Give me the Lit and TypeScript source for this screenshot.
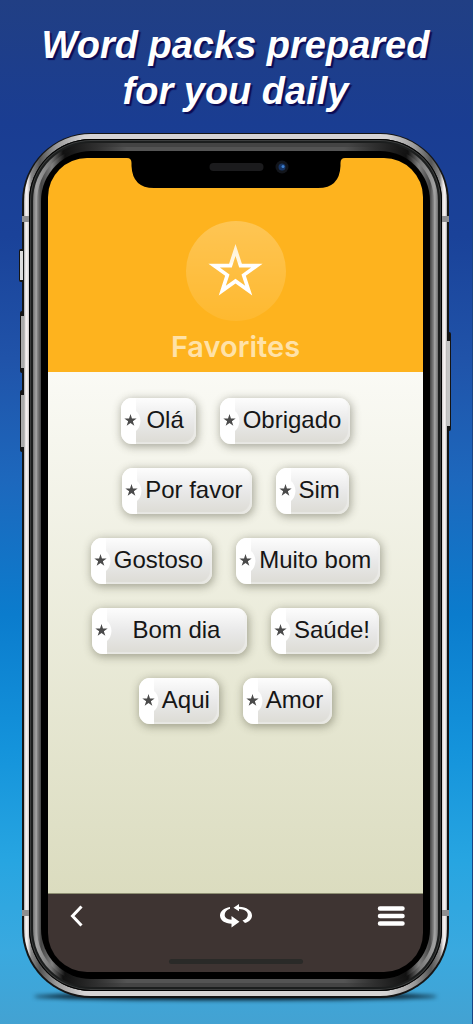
import { LitElement, html, css, svg } from "lit";
import { customElement, property } from "lit/decorators.js";
import { classMap } from "lit/directives/class-map.js";

interface Word {
  text: string;
  size?: "short" | "wide";
}

const WORDS: Word[] = [
  { text: "Olá", size: "short" },
  { text: "Obrigado" },
  { text: "Por favor" },
  { text: "Sim" },
  { text: "Gostoso" },
  { text: "Muito bom" },
  { text: "Bom dia", size: "wide" },
  { text: "Saúde!" },
  { text: "Aqui" },
  { text: "Amor" },
];

/** Points of a regular five-pointed star. */
function starPath(cx: number, cy: number, r: number): string {
  const pts: string[] = [];
  for (let i = 0; i < 10; i++) {
    const radius = i % 2 === 0 ? r : r * 0.382;
    const a = (Math.PI / 5) * i - Math.PI / 2;
    pts.push(`${(cx + radius * Math.cos(a)).toFixed(2)} ${(cy + radius * Math.sin(a)).toFixed(2)}`);
  }
  return `M${pts.join("L")}Z`;
}

@customElement("word-chip")
class WordChip extends LitElement {
  @property() text = "";
  @property() size = "";

  static styles = css`
    :host {
      display: block;
    }
    .chip {
      display: flex;
      align-items: center;
      height: 46px;
      margin: 0;
      padding: 0 9px 0 0;
      border: 0;
      border-radius: 11px;
      overflow: hidden;
      font: 24px/28px "Liberation Sans", Arial, sans-serif;
      color: #161616;
      background: linear-gradient(#fdfdfd, #e9e9e9 50%, #dcdbd4);
      box-shadow: 1px 2px 8px 1px rgba(70, 70, 50, 0.42), inset -2px -2px 1px rgba(240, 240, 236, 0.6);
      cursor: pointer;
    }
    .short {
      min-width: 75px;
    }
    .wide {
      min-width: 155px;
    }
    .tab {
      flex: none;
      width: 23px;
      height: 46px;
    }
    .label {
      flex: 1;
      padding-bottom: 2px;
      text-align: center;
      white-space: nowrap;
    }
  `;

  render() {
    return html`<button
      class=${classMap({ chip: true, short: this.size === "short", wide: this.size === "wide" })}
      type="button"
    >
      <svg class="tab" viewBox="0 0 23 46" aria-hidden="true">
        <path fill="#fff" d="M0 0H15V13Q19 16 19.500 23Q19 30 15 33V46H0Z" />
        <path fill="#4a4a4a" d=${starPath(9.5, 22.5, 6.5)} />
      </svg>
      <span class="label">${this.text}</span>
    </button>`;
  }
}

@customElement("app-root")
class AppRoot extends LitElement {
  static styles = css`
    :host {
      display: flex;
      flex-direction: column;
      box-sizing: border-box;
      min-height: 100vh;
      padding: 22px 23px 26px 22px;
      border-right: 1px solid #1a4484;
      isolation: isolate;
      font-family: "Liberation Sans", Arial, sans-serif;
      background: linear-gradient(
        #213f84 0%,
        #1a3d92 12%,
        #1a4299 23%,
        #2053a9 35%,
        #1d68bd 47%,
        #0b7ccd 60%,
        #1493db 73%,
        #27a5e1 84%,
        #3aa9df 93%,
        #43a2d2 100%
      );
    }
    .title {
      margin: 0 0 19px;
      font-size: 38px;
      line-height: 46px;
      font-weight: bold;
      font-style: italic;
      text-align: center;
      color: #fff;
      text-shadow: 2px 2px 1px #0b0b55;
    }
    .phone,
    .steel,
    .groove,
    .rim,
    .rim-inner,
    .bezel,
    .screen {
      display: flex;
      flex-direction: column;
      flex: 1;
      min-width: 0;
    }
    .phone {
      position: relative;
      padding: 1px 2px 2px;
      border-radius: 69px;
      background: #151515;
    }
    .phone::before {
      content: "";
      position: absolute;
      z-index: -1;
      left: 12px;
      right: 12px;
      bottom: -2px;
      height: 7px;
      border-radius: 50%;
      background: #03101a;
      filter: blur(2px);
    }
    .steel {
      padding: 5px;
      border-radius: 67px;
      background: linear-gradient(
        90deg,
        #a8a8a8 0,
        #fbf6f6 2px,
        #e6e2e2 4px,
        #8a8a8a 7px,
        #555 16px,
        #999 32px,
        #d6d4d4 60px,
        #d6d4d4 calc(100% - 60px),
        #999 calc(100% - 32px),
        #555 calc(100% - 16px),
        #8a8a8a calc(100% - 7px),
        #e6e2e2 calc(100% - 4px),
        #fbf6f6 calc(100% - 2px),
        #a8a8a8 100%
      );
    }
    .groove {
      padding: 4px;
      border-radius: 62px;
      background: #1c1e1e;
      box-shadow: inset 0 0 0 1px #000, inset 0 0 0 2px #3c3e3e;
    }
    .rim {
      padding: 4px;
      border-radius: 58px;
      background: linear-gradient(
        90deg,
        #6d6d6d 0,
        #a2a2a2 3px,
        #777 18px,
        #111 30px,
        #2c2c2c 60px,
        #444 90px,
        #444 calc(100% - 90px),
        #2c2c2c calc(100% - 60px),
        #111 calc(100% - 30px),
        #777 calc(100% - 18px),
        #a2a2a2 calc(100% - 3px),
        #6d6d6d 100%
      );
    }
    .rim-inner {
      padding: 4px;
      border-radius: 54px;
      background: linear-gradient(
        90deg,
        #8c8c8c 0,
        #444 4px,
        #808080 15px,
        #111 28px,
        #303030 60px,
        #545454 90px,
        #545454 calc(100% - 90px),
        #303030 calc(100% - 60px),
        #111 calc(100% - 28px),
        #808080 calc(100% - 15px),
        #444 calc(100% - 4px),
        #8c8c8c 100%
      );
    }
    .bezel {
      padding: 7px;
      border-radius: 50px;
      background: #000;
    }
    .screen {
      position: relative;
      overflow: hidden;
      border-radius: 39px;
    }
    .notch {
      position: absolute;
      top: 0;
      left: 50%;
      width: 218px;
      height: 30px;
      margin-left: -109px;
    }
    .key {
      position: absolute;
      box-sizing: border-box;
      width: 4px;
      background: #aaa;
      border: solid #141414;
      border-width: 5px 0 5px 1px;
      border-radius: 2px 0 0 2px;
    }
    .mute {
      left: -3px;
      top: 116px;
      height: 33px;
      border-width: 2px 0 2px 1px;
      background: #ddd;
    }
    .vol-up {
      left: -2px;
      top: 178px;
      height: 62px;
    }
    .vol-down {
      left: -2px;
      top: 257px;
      height: 62px;
    }
    .power {
      right: -2px;
      top: 199px;
      height: 99px;
      background: #c4c4c4;
      border-width: 9px 1px 5px 0;
      border-radius: 0 2px 2px 0;
    }
    .band {
      position: absolute;
      width: 7px;
      height: 6px;
      background: #8e8e90;
    }
    .left {
      left: 0;
    }
    .right {
      right: 0;
    }
    .upper {
      top: 83px;
    }
    .lower {
      bottom: 82px;
    }
    .head {
      display: flex;
      flex-direction: column;
      align-items: center;
      padding: 63px 16px 6px;
      background: #feb31e;
    }
    .badge {
      width: 100px;
      height: 100px;
      border-radius: 50%;
      background: linear-gradient(rgba(255, 255, 255, 0.24), rgba(255, 255, 255, 0.08));
    }
    .name {
      margin: 6px 0 0;
      font: 600 29px/39px Inter, Roboto, sans-serif;
      color: #ffe2a8;
    }
    .body {
      flex: 1;
      padding: 26px 28px;
      background: linear-gradient(#fafaf5, #dbdcbf);
    }
    .words {
      display: flex;
      flex-wrap: wrap;
      justify-content: center;
      gap: 24px;
      margin: 0;
      padding: 0;
      list-style: none;
    }
    .bar {
      display: grid;
      grid-template-columns: 1fr auto 1fr;
      align-items: center;
      padding: 9px 18px 8px;
      border-top: 1px solid #8d8f73;
      background: #3e3432;
    }
    .tool {
      display: block;
      margin: 0;
      padding: 0;
      border: 0;
      background: none;
      cursor: pointer;
    }
    .back {
      justify-self: start;
    }
    .menu {
      justify-self: end;
    }
    .icon {
      display: block;
    }
    .home {
      grid-column: 1 / -1;
      justify-self: center;
      width: 134px;
      height: 5px;
      margin-top: 30px;
      border-radius: 3px;
      background: #2a2a28;
    }
  `;

  private notch() {
    return html`<svg class="notch" viewBox="0 0 218 30" aria-hidden="true">
      <path d="M0 0Q4.500 0 4.500 5V8Q5.500 30 27 30H191Q212.500 30 213.500 8V5Q213.500 0 218 0Z" />
      <rect x="82.500" y="5" width="54" height="8" rx="4" fill="#1b1b1d" />
      <circle cx="155" cy="9" r="6.500" fill="#12151b" />
      <circle cx="155" cy="9" r="3.500" fill="#173463" />
      <circle cx="156" cy="8.500" r="1.500" fill="#3f80cf" />
    </svg>`;
  }

  private badge() {
    const d = starPath(49.5, 51.5, 28.5) + starPath(49.5, 51.5, 16.5);
    return html`<svg class="badge" viewBox="0 0 100 100" aria-hidden="true">
      ${svg`<defs>
        <linearGradient id="gloss" x1="0" y1="0" x2="0" y2="1">
          <stop offset="0" stop-color="#fff2d6" />
          <stop offset="0.35" stop-color="#fff7e6" />
          <stop offset="0.4" stop-color="#fff" />
        </linearGradient>
      </defs>
      <path fill="url(#gloss)" fill-rule="evenodd" d=${d} />`}
    </svg>`;
  }

  private toolbar() {
    return html`<nav class="bar">
      <button class="tool back" type="button" aria-label="Back">
        <svg class="icon" width="20" height="26" viewBox="0 0 20 26">
          <path d="M15.500 3.500L6.500 13L15.500 22.500" fill="none" stroke="#fff" stroke-width="3" />
        </svg>
      </button>
      <button class="tool" type="button" aria-label="Repeat">
        <svg class="icon" width="32" height="26" viewBox="0 0 32 26">
          <g fill="#fff">
            <path
              d="M10 4C4 5.200 0 8 0 12.500C0 17.500 5 20.500 11.500 20.800V24.500L19.500 18.800L11.500 13V16.800C7 16.300 4.700 14.800 4.700 12C4.700 9.300 6.500 7 10 5.800Z"
            />
            <path
              d="M13.500 4.800L19 1V3.700C26.500 4 32 7.500 32 12.500C32 16 29.500 18.800 25 20L22.500 17.500C26 16.200 27.800 14.500 27.800 11.800C27.800 8.500 24.500 6.300 19 6V8.300Z"
            />
          </g>
        </svg>
      </button>
      <button class="tool menu" type="button" aria-label="Menu">
        <svg class="icon" width="28" height="26" viewBox="0 0 28 26">
          <path d="M3 5.500H25.500M3 13H25.500M3 20.500H25.500" stroke="#fff" stroke-width="4.500" stroke-linecap="round" />
        </svg>
      </button>
      <div class="home"></div>
    </nav>`;
  }

  private screen() {
    return html`<main class="screen">
      <header class="head">
        ${this.badge()}
        <h2 class="name">Favorites</h2>
      </header>
      <section class="body">
        <ul class="words">
          ${WORDS.map(
            (w) => html`<li><word-chip .text=${w.text} .size=${w.size ?? ""}></word-chip></li>`
          )}
        </ul>
      </section>
      ${this.toolbar()} ${this.notch()}
    </main>`;
  }

  render() {
    return html`
      <h1 class="title">Word packs prepared<br />for you daily</h1>
      <div class="phone">
        <div class="steel">
          <div class="groove">
            <div class="rim">
              <div class="rim-inner"><div class="bezel">${this.screen()}</div></div>
            </div>
          </div>
        </div>
        <i class="key mute"></i>
        <i class="key vol-up"></i>
        <i class="key vol-down"></i>
        <i class="key power"></i>
        <i class="band left upper"></i>
        <i class="band right upper"></i>
        <i class="band left lower"></i>
        <i class="band right lower"></i>
      </div>
    `;
  }
}
